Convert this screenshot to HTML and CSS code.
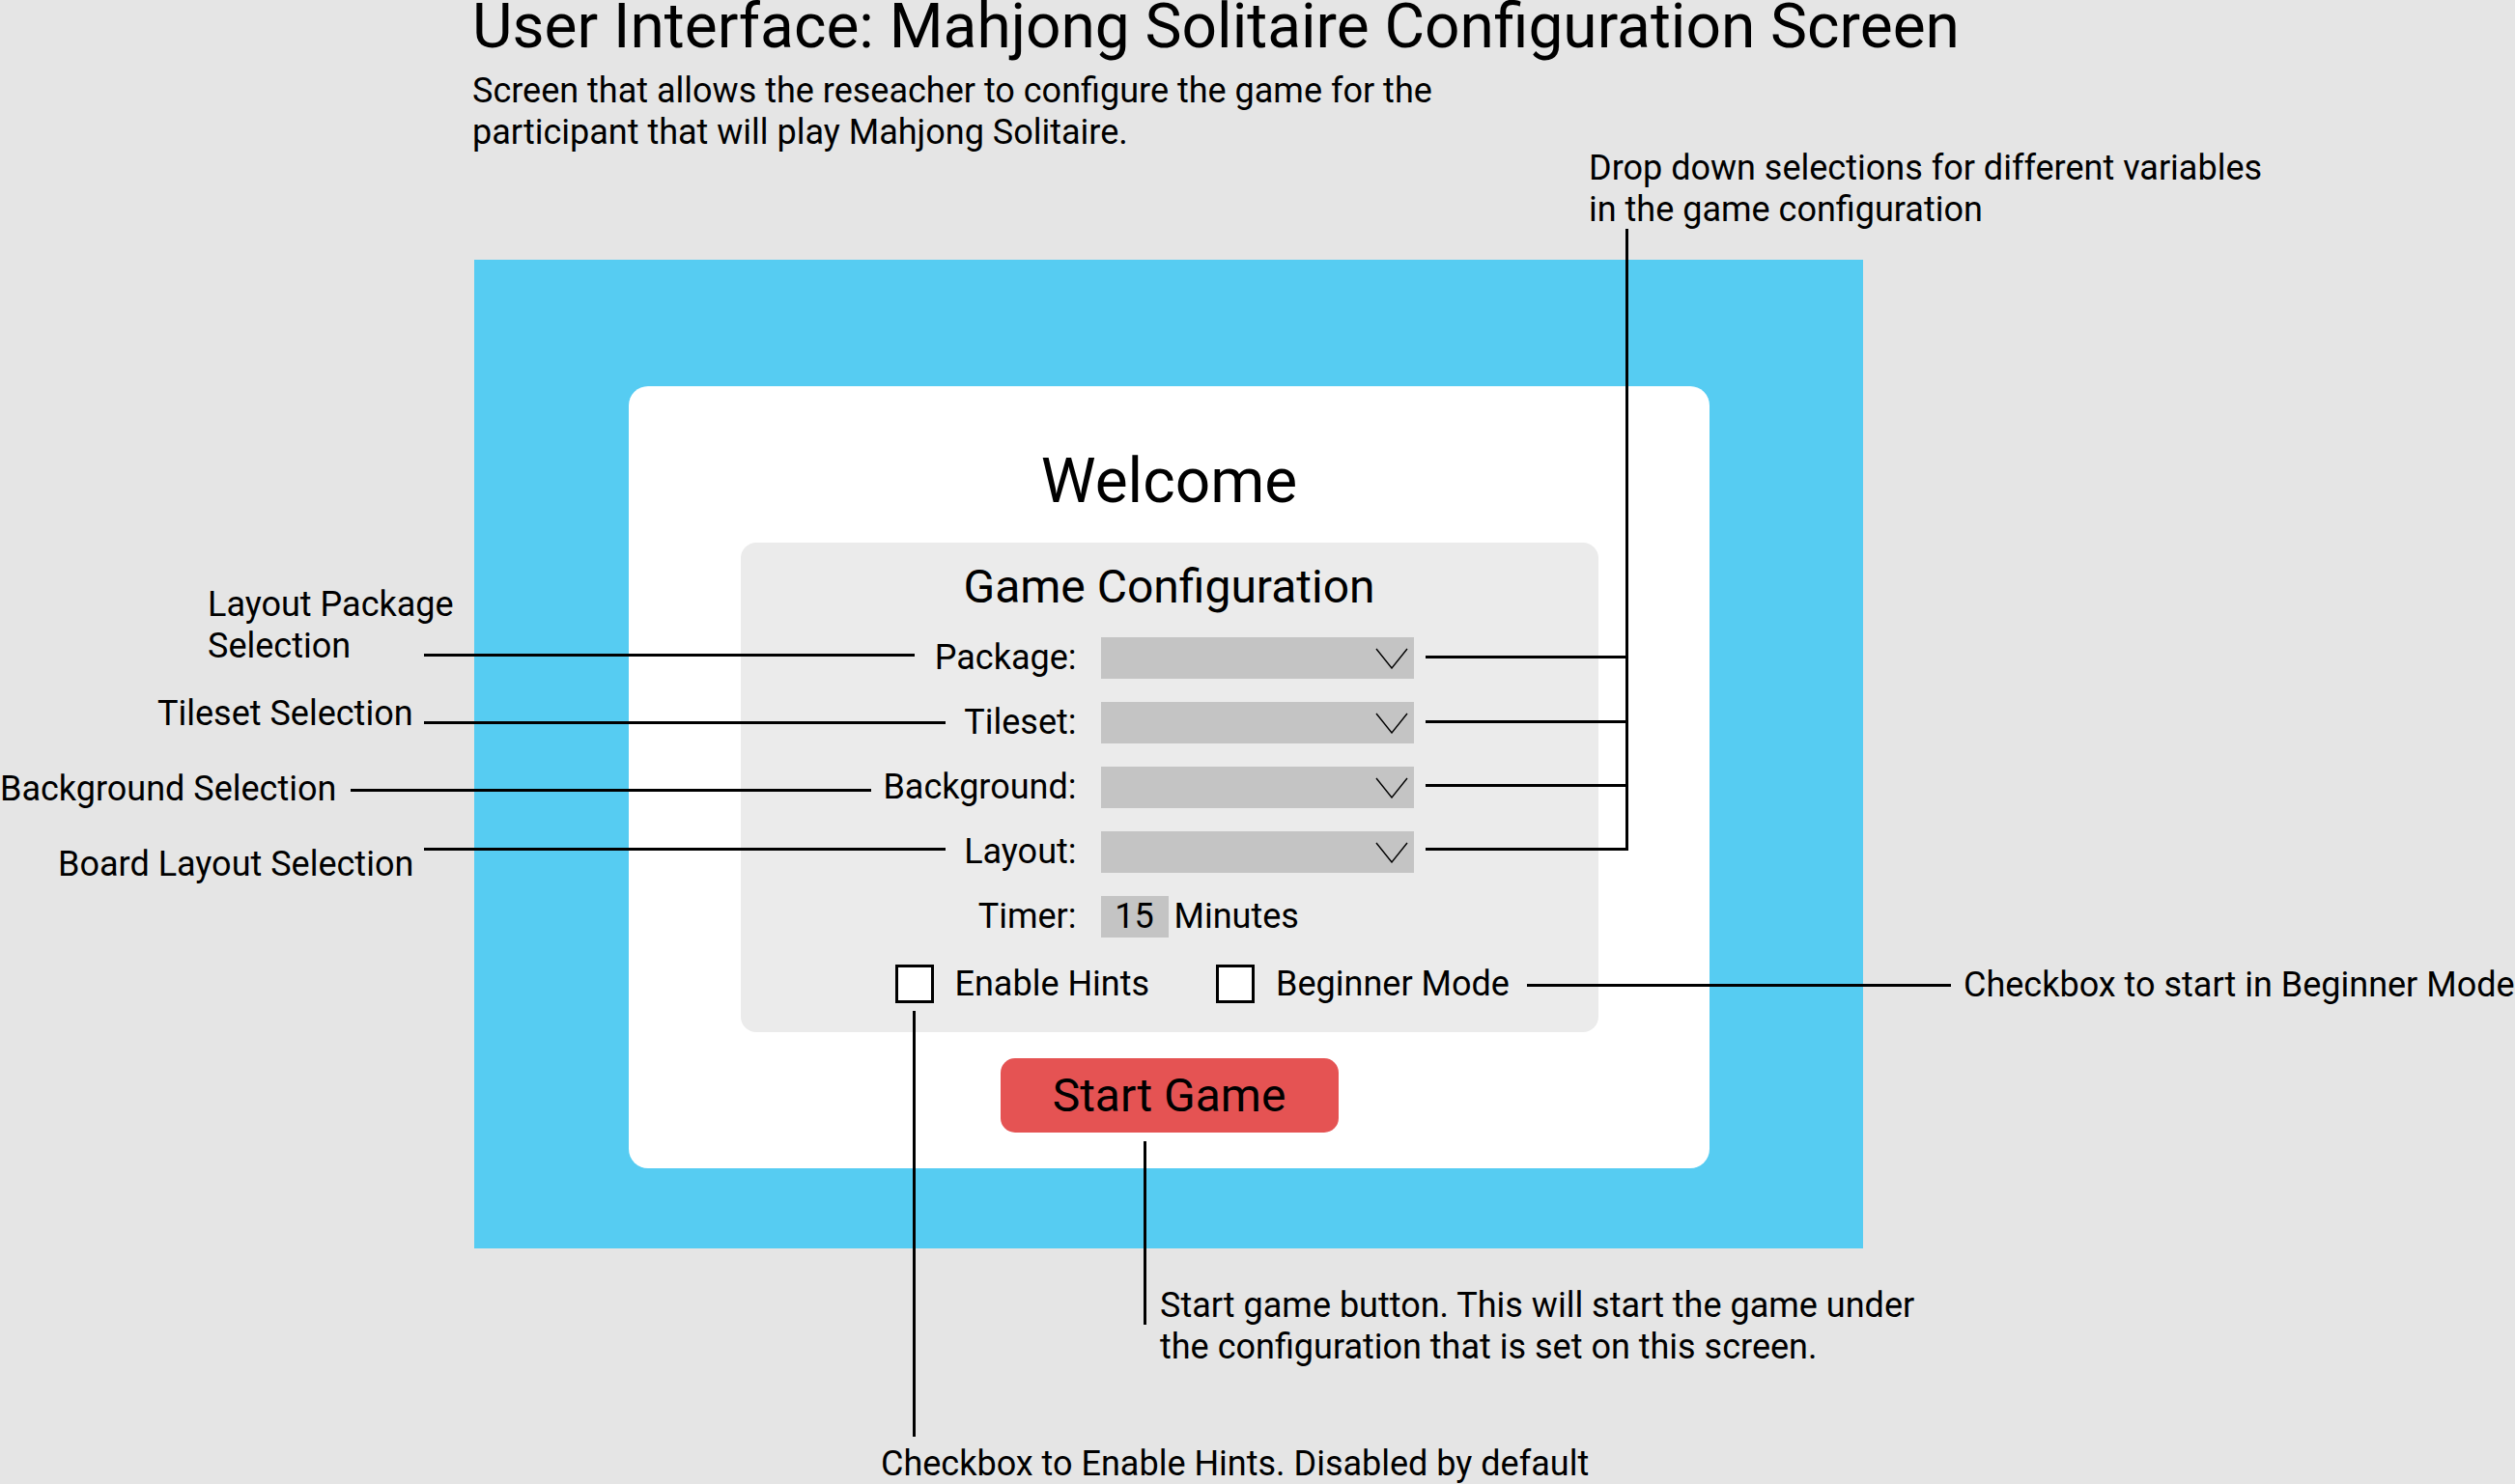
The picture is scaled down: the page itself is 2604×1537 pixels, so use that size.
FILE: index.html
```html
<!DOCTYPE html>
<html lang="en">
<head>
<meta charset="utf-8">
<title>User Interface: Mahjong Solitaire Configuration Screen</title>
<link rel="stylesheet" href="styles.css">
</head>
<body>
<div class="page">
  <header class="header">
    <h1 class="title">User Interface: Mahjong Solitaire Configuration Screen</h1>
    <p class="subtitle">Screen that allows the reseacher to configure the game for the<br>participant that will play Mahjong Solitaire.</p>
  </header>

  <div class="frame">
    <div class="card">
      <div class="welcome">Welcome</div>
      <section class="panel">
        <div class="panel-title">Game Configuration</div>
        <div class="form">
          <div class="label">Package:</div>
          <div class="select"><svg class="chev" width="34" height="22" viewBox="0 0 34 22"><path d="M1 1 L17 21 L33 1" fill="none" stroke="#000" stroke-width="1.4"/></svg></div>
          <div class="label">Tileset:</div>
          <div class="select"><svg class="chev" width="34" height="22" viewBox="0 0 34 22"><path d="M1 1 L17 21 L33 1" fill="none" stroke="#000" stroke-width="1.4"/></svg></div>
          <div class="label">Background:</div>
          <div class="select"><svg class="chev" width="34" height="22" viewBox="0 0 34 22"><path d="M1 1 L17 21 L33 1" fill="none" stroke="#000" stroke-width="1.4"/></svg></div>
          <div class="label">Layout:</div>
          <div class="select"><svg class="chev" width="34" height="22" viewBox="0 0 34 22"><path d="M1 1 L17 21 L33 1" fill="none" stroke="#000" stroke-width="1.4"/></svg></div>
          <div class="label">Timer:</div>
          <div class="timer-field"><span class="timer-box">15</span><span class="timer-unit">Minutes</span></div>
        </div>
        <div class="checks">
          <label class="check"><span class="box"></span><span class="check-text">Enable Hints</span></label>
          <label class="check"><span class="box"></span><span class="check-text">Beginner Mode</span></label>
        </div>
      </section>
      <div class="start">Start Game</div>
    </div>
  </div>

  <div class="note note-drop">Drop down selections for different variables<br>in the game configuration</div>
  <div class="note note-pkg">Layout Package<br>Selection</div>
  <div class="note note-tile">Tileset Selection</div>
  <div class="note note-bg">Background Selection</div>
  <div class="note note-board">Board Layout Selection</div>
  <div class="note note-beginner">Checkbox to start in Beginner Mode</div>
  <div class="note note-start">Start game button. This will start the game under<br>the configuration that is set on this screen.</div>
  <div class="note note-hints">Checkbox to Enable Hints. Disabled by default</div>

  <div class="line l-pkg"></div>
  <div class="line l-tile"></div>
  <div class="line l-bg"></div>
  <div class="line l-board"></div>
  <div class="line r-pkg"></div>
  <div class="line r-tile"></div>
  <div class="line r-bg"></div>
  <div class="line r-board"></div>
  <div class="line r-vert"></div>
  <div class="line l-beginner"></div>
  <div class="line l-hints"></div>
  <div class="line l-start"></div>
</div>
</body>
</html>
```

FILE: styles.css
```css
html, body {
  margin: 0;
  padding: 0;
  background: #e5e5e5;
}

.page {
  position: relative;
  width: 2604px;
  height: 1537px;
  overflow: hidden;
  background: #e5e5e5;
  color: #000;
  font-family: Roboto, "Liberation Sans", sans-serif;
  font-weight: 400;
}

.header {
  padding-left: 489px;
}

.title {
  margin: 0;
  font-size: 64px;
  line-height: 56px;
  font-weight: 400;
  white-space: nowrap;
}

.subtitle {
  margin: 17px 0 0;
  font-size: 36px;
  line-height: 43px;
}

.frame {
  margin: 110px 0 0 491px;
  width: 1438px;
  height: 1024px;
  box-sizing: border-box;
  padding: 131px 0 0 160px;
  background: #56ccf2;
}

.card {
  width: 1119px;
  height: 810px;
  box-sizing: border-box;
  padding-top: 61px;
  background: #fff;
  border-radius: 20px;
  display: flex;
  flex-direction: column;
  align-items: center;
}

.welcome {
  font-size: 64px;
  line-height: 76px;
}

.panel {
  margin-top: 25px;
  width: 888px;
  height: 507px;
  box-sizing: border-box;
  padding-top: 18px;
  background: #ebebeb;
  border-radius: 16px;
  display: flex;
  flex-direction: column;
}

.panel-title {
  font-size: 48px;
  line-height: 55px;
  text-align: center;
}

.form {
  margin-top: 25px;
  display: grid;
  grid-template-columns: 348px 324px;
  grid-auto-rows: 43px;
  column-gap: 25px;
  row-gap: 24px;
}

.label {
  text-align: right;
  font-size: 36px;
  line-height: 43px;
}

.select {
  background: #c4c4c4;
  display: flex;
  align-items: center;
  justify-content: flex-end;
  padding-right: 6px;
}

.chev {
  display: block;
}

.timer-field {
  display: flex;
  align-items: center;
  gap: 6px;
  font-size: 36px;
  line-height: 43px;
}

.timer-box {
  width: 70px;
  height: 43px;
  background: #c4c4c4;
  text-align: center;
}

.checks {
  margin: 28px 0 0 160px;
  height: 40px;
  display: flex;
  align-items: center;
  gap: 69px;
}

.check {
  display: flex;
  align-items: center;
  gap: 22px;
  font-size: 36px;
  line-height: 40px;
}

.box {
  width: 40px;
  height: 40px;
  box-sizing: border-box;
  border: 3px solid #000;
  background: #fff;
}

.start {
  margin-top: 27px;
  width: 350px;
  height: 77px;
  border-radius: 15px;
  background: #e55353;
  font-size: 48px;
  line-height: 77px;
  text-align: center;
}

/* annotation callouts on the diagram canvas */
.note {
  position: absolute;
  font-size: 36px;
  line-height: 43px;
  white-space: nowrap;
}

.note-drop { left: 1645px; top: 153px; }
.note-pkg { left: 215px; top: 605px; }
.note-tile { left: 163px; top: 718px; }
.note-bg { left: 0; top: 796px; }
.note-board { left: 60px; top: 874px; }
.note-beginner { left: 2033px; top: 999px; }
.note-start { left: 1201px; top: 1331px; }
.note-hints { left: 912px; top: 1496px; line-height: 40px; }

.line {
  position: absolute;
  background: #000;
  height: 3px;
}

.l-pkg { left: 439px; top: 677px; width: 508px; }
.l-tile { left: 439px; top: 747px; width: 540px; }
.l-bg { left: 363px; top: 817px; width: 539px; }
.l-board { left: 439px; top: 878px; width: 540px; }

.r-pkg { left: 1476px; top: 679px; width: 209px; }
.r-tile { left: 1476px; top: 746px; width: 209px; }
.r-bg { left: 1476px; top: 812px; width: 209px; }
.r-board { left: 1476px; top: 878px; width: 209px; }
.r-vert { left: 1683px; top: 237px; width: 3px; height: 644px; }

.l-beginner { left: 1581px; top: 1019px; width: 439px; }
.l-hints { left: 945px; top: 1047px; width: 3px; height: 441px; }
.l-start { left: 1184px; top: 1182px; width: 3px; height: 190px; }
```
